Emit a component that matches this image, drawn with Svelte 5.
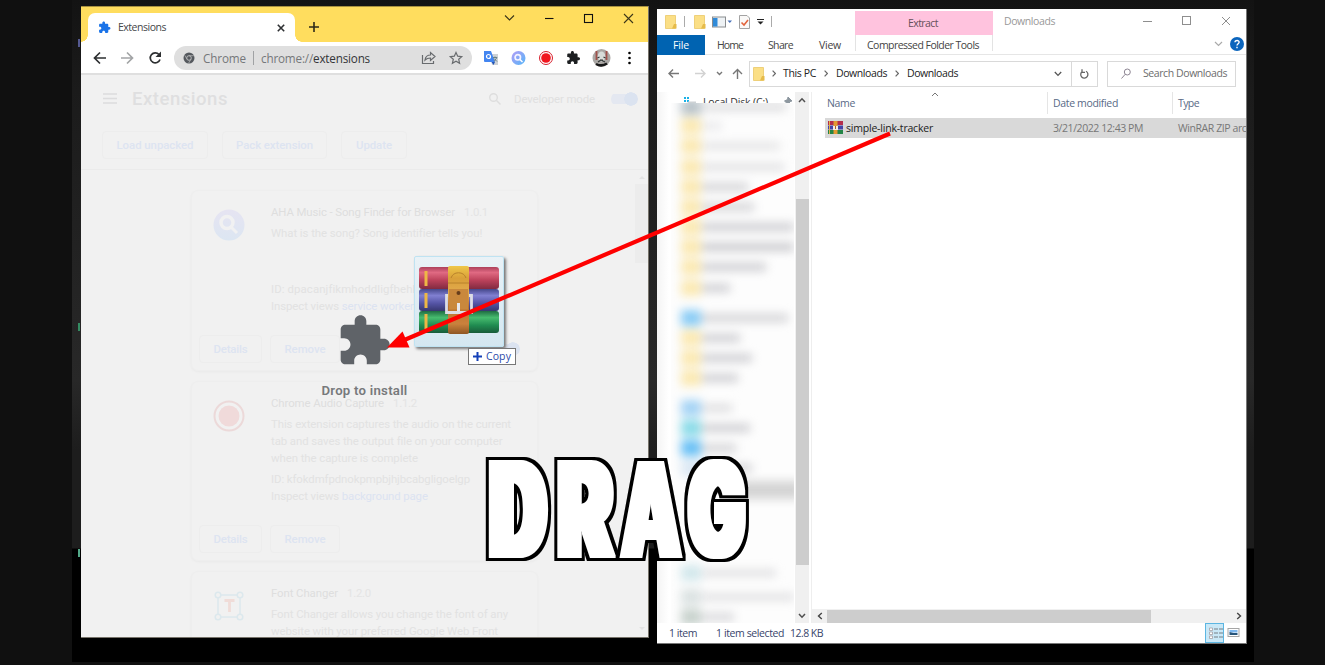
<script>
  const puzzle =
    'M20.5 11H19V7c0-1.1-.9-2-2-2h-4V3.5C13 2.12 11.88 1 10.5 1S8 2.12 8 3.5V5H4c-1.1 0-1.99.9-1.99 2v3.8H3.5c1.49 0 2.7 1.21 2.7 2.7s-1.21 2.7-2.7 2.7H2V20c0 1.1.9 2 2 2h3.8v-1.5c0-1.49 1.21-2.7 2.7-2.7 1.49 0 2.7 1.21 2.7 2.7V22H17c1.1 0 2-.9 2-2v-4h1.5c1.38 0 2.5-1.12 2.5-2.5S21.88 11 20.5 11z';

  const extensions = [
    {
      icon: 'search', name: 'AHA Music - Song Finder for Browser', nameW: 184, version: '1.0.1',
      lines: [['What is the song? Song identifier tells you!', 211]],
      id: 'ID: dpacanjfikmhoddligfbehkpomnbgblf', idW: 203, view: 'service worker', viewW: 72, on: true
    },
    {
      icon: 'record', name: 'Chrome Audio Capture', nameW: 113, version: '1.1.2',
      lines: [
        ['This extension captures the audio on the current', 240],
        ['tab and saves the output file on your computer', 231],
        ['when the capture is complete', 147]
      ],
      id: 'ID: kfokdmfpdnokpmpbjhjbcabgligoelgp', idW: 199, view: 'background page', viewW: 86, on: false
    },
    {
      icon: 'font', name: 'Font Changer', nameW: 67, version: '1.2.0',
      lines: [
        ['Font Changer allows you change the font of any', 237],
        ['website with your preferred Google Web Front', 227]
      ],
      id: '', idW: 0, view: '', viewW: 0, on: false
    }
  ];

  // Blurred navigation entries: top, icon tint, label width, label opacity
  const nav = [
    [-2, '#b9c3c9', 84, 0.6], [17, '#fbe9b3', 20, 0.35], [37, '#fbe9b3', 78, 0.45], [58, '#fbe9b3', 82, 0.5],
    [78, '#fbe9b3', 46, 0.8], [98, '#fbe9b3', 52, 0.8], [118, '#fbe9b3', 92, 0.9], [138, '#fbe9b3', 92, 1.1],
    [158, '#fbe9b3', 64, 0.9], [179, '#fbe9b3', 28, 0.9], [209, '#8accf5', 86, 0.8], [229, '#fbe9b3', 38, 0.9],
    [249, '#fbe9b3', 50, 0.9], [269, '#fbe9b3', 36, 0.9], [299, '#a4d3f5', 30, 0.6], [319, '#8adbe8', 48, 0.9],
    [339, '#69c0f5', 34, 0.8], [359, '#dbe8f4', 50, 0.8], [464, '#d3e8ec', 74, 0.5], [488, '#dbe2e2', 92, 0.5],
    [508, '#c8d2cd', 32, 0.7]
  ];

  // Poster letters: slot, and how far the face is fattened sideways and vertically
  const rim = 3;
  const letters = [
    { c: 'D', x: 485.5, w: 65.5, fx: 5, fy: 0 },
    { c: 'R', x: 554, w: 65, fx: 4, fy: 1 },
    { c: 'A', x: 616.5, w: 69.5, fx: 3, fy: 0 },
    { c: 'G', x: 684, w: 65.5, fx: 4, fy: 2 }
  ];

  // Tracks a label out so that it takes up the given width
  function fit(node, width) {
    const n = node.textContent.length;
    const natural = node.getBoundingClientRect().width;
    node.style.letterSpacing = `${(width - natural) / n}px`;
  }

  // Scales a poster letter to its slot, leaving room for the fattening and the rim
  function slot(node, { c, x, w, fx, fy }) {
    const ctx = document.createElement('canvas').getContext('2d');
    ctx.font = '900 138px Inter';
    const m = ctx.measureText(c);
    const left = -m.actualBoundingBoxLeft;
    const sx = (w - 2 * (fx + rim)) / (m.actualBoundingBoxRight - left);
    const sy = (103.5 - 2 * (fy + rim)) / 100.4;
    node.setAttribute('transform', `translate(${x + fx + rim - left * sx} ${560.5 - fy - rim}) scale(${sx} ${sy})`);
  }
</script>

{#snippet books()}
  <svg class="books" viewBox="0 0 80 68" preserveAspectRatio="none">
    <defs>
      <linearGradient id="red" x2="0" y2="1"><stop offset="0" stop-color="#a83350" /><stop offset=".25" stop-color="#e0607a" /><stop offset=".6" stop-color="#b93550" /><stop offset="1" stop-color="#7b1c33" /></linearGradient>
      <linearGradient id="blue" x2="0" y2="1"><stop offset="0" stop-color="#393b83" /><stop offset=".3" stop-color="#7a78d0" /><stop offset=".65" stop-color="#4b49a0" /><stop offset="1" stop-color="#2b2a66" /></linearGradient>
      <linearGradient id="green" x2="0" y2="1"><stop offset="0" stop-color="#126235" /><stop offset=".3" stop-color="#3cb965" /><stop offset=".65" stop-color="#138545" /><stop offset="1" stop-color="#0a522c" /></linearGradient>
      <linearGradient id="belt" x2="0" y2="1"><stop offset="0" stop-color="#f0c53c" /><stop offset=".18" stop-color="#d99a2b" /><stop offset=".4" stop-color="#e2a642" /><stop offset=".6" stop-color="#b96a20" /><stop offset=".85" stop-color="#c97a30" /><stop offset="1" stop-color="#8a4c14" /></linearGradient>
    </defs>
    <rect x="0" y="1" width="80" height="22" rx="3" fill="url(#red)" />
    <rect x="0" y="23" width="80" height="22" rx="3" fill="url(#blue)" />
    <rect x="0" y="45" width="80" height="22" rx="3" fill="url(#green)" />
    <path d="M7 5v15M7 27v15M7 48v15" stroke="#efb338" stroke-width="3" />
    <rect x="29" y="0" width="21" height="68" rx="2" fill="url(#belt)" />
    <path d="M32 12a8 8 0 0 1 15 0M29 17h21" stroke="#b67a1d" fill="none" />
    <path d="M29 29.500h-1.500v17h25V29.500H50" fill="none" stroke="#dcdce4" stroke-width="2.800" />
    <path d="M30 23h19v20.500H30z" fill="#c8812f" />
    <circle cx="39.500" cy="27" r="2" fill="#5d300c" />
    <path d="M39.500 37v8" stroke="#e8e8ee" stroke-width="3" />
  </svg>
{/snippet}

{#snippet zip()}
  <svg class="zip" viewBox="0 0 15 13">
    <path d="M0 0h15v4H0z" fill="#b52d4c" /><path d="M0 4.500h15v4H0z" fill="#4444a8" /><path d="M0 9h15v4H0z" fill="#238546" />
    <path d="M1.500 0v13" stroke="#e5b04a" /><path d="M5.500 0h4v13h-4z" fill="#e49a32" /><path d="M5 5h5v4H5z" fill="#f3eee6" /><path d="M7.500 5v3" stroke="#b0601f" />
  </svg>
{/snippet}

{#snippet folder()}
  <svg class="folder" viewBox="0 0 12 14"><path d="M.5.5h10v13H.5z" fill="#fbdf86" stroke="#eed07a" /><path d="M9 9h2.500v4.500H7z" fill="#e6bb4a" /></svg>
{/snippet}

{#snippet chevron()}
  <svg class="chev" viewBox="0 0 4 7"><path d="M.6.6L3.400 3.500.6 6.400" fill="none" stroke="#666" stroke-width="1.200" /></svg>
{/snippet}

<div class="desktop">
  <div class="under"></div>
  <i class="fleck a"></i><i class="fleck b"></i><i class="fleck c"></i>

  <section class="chrome">
    <header class="tabs">
      <div class="tab">
        <svg class="tabicon" viewBox="0 0 24 24"><path d={puzzle} fill="#1a73e8" /></svg>
        <span class="tabname" use:fit={48}>Extensions</span>
        <svg class="x" viewBox="0 0 8 8"><path d="M.8.8l6.400 6.400M7.200.8L.8 7.200" stroke="#2e3033" stroke-width="1.600" /></svg>
      </div>
      <svg class="plus" viewBox="0 0 10 10"><path d="M5 0v10M0 5h10" stroke="#2e2a18" stroke-width="1.600" /></svg>
      <svg class="winbtns" viewBox="0 0 132 12">
        <g fill="none" stroke="#3c3619" stroke-width="1.100">
          <path d="M2 3.500L6.500 8 11 3.500" /><path d="M42 6.500h8.500" stroke="#111" />
          <rect x="81.500" y="2.500" width="8" height="8" stroke="#111" /><path d="M121 2l9 9M130 2l-9 9" />
        </g>
      </svg>
    </header>

    <div class="toolbar">
      <svg class="nav" viewBox="0 0 72 16" fill="none" stroke-width="1.700">
        <path d="M14 8H3M8 2.500L2.500 8 8 13.500" stroke="#2d2f31" />
        <path d="M29 8h11M35 2.500L40.500 8 35 13.500" stroke="#a2a4a6" />
        <path d="M67 4.500A5 5 0 1 0 68 9.500" stroke="#2d2f31" /><path d="M69 1.500v5.500h-5.500z" fill="#2d2f31" />
      </svg>
      <div class="omni">
        <svg class="globe" viewBox="0 0 12 12"><circle cx="6" cy="6" r="5.500" fill="#55595e" /><circle cx="6" cy="6" r="2.300" fill="none" stroke="#d0d0d0" stroke-width=".8" /><path d="M6 3.700h5M4 7.200L1.700 3.200M8 7.200L5.700 11" stroke="#bbb" stroke-width=".7" /></svg>
        <span class="site" use:fit={43}>Chrome</span><i></i>
        <span class="url"><span use:fit={52}>chrome://</span><b use:fit={57}>extensions</b></span>
        <svg class="acts" viewBox="0 0 44 14" fill="none" stroke="#686b6e" stroke-width="1.200">
          <path d="M2.500 4v8.500h11V10M5 9c.5-3.500 2.500-5 5.500-5V1.500L15 5.500 10.500 9.500V7C8 7 6.500 7.500 5 9z" />
          <path d="M36 1.500l1.700 3.700 4 .4-3 2.700.9 4L36 10.200l-3.600 2.100.9-4-3-2.700 4-.4z" />
        </svg>
      </div>
      <svg class="exts" viewBox="0 0 152 20">
        <defs><linearGradient id="aha" x2="1" y2="1"><stop offset="0" stop-color="#b39cf6" /><stop offset="1" stop-color="#55b6f8" /></linearGradient></defs>
        <path d="M6 6h8v11H8z" fill="#cfd2d5" /><path d="M0 3h7l4 11H1q-1 0-1-1z" fill="#4385f0" /><path d="M7.500 14h3.500l-1.500 3z" fill="#2457b8" />
        <circle cx="4.500" cy="8.500" r="2" fill="none" stroke="#fff" stroke-width="1.200" /><path d="M9 9.500h4M11 8.500v1M10 13.500l3-4M10 10.500l3 3" stroke="#698288" />
        <circle cx="34.500" cy="10" r="7" fill="url(#aha)" /><circle cx="33.800" cy="9.300" r="2.700" fill="none" stroke="#f5f3ff" stroke-width="1.700" /><path d="M36 11.500l2.500 2.500" stroke="#fff" stroke-width="1.500" />
        <circle cx="62" cy="10" r="6.500" fill="#fff" stroke="#d81e2c" stroke-width="1" /><circle cx="62" cy="10" r="4.800" fill="#f0171f" />
        <g transform="translate(82 2.500) scale(.61)"><path d={puzzle} fill="#1d1f21" /></g>
        <circle cx="117.500" cy="10" r="9" fill="#aaa7a4" /><path d="M112.500 3v9M122.500 3v9" stroke="#a0504a" stroke-width="1.800" /><ellipse cx="117.500" cy="8.500" rx="3.800" ry="5" fill="#d8dcd9" /><path d="M113.500 10l2-1M119.500 9l2 1M116 12h3M114 14l3-2 4 2" stroke="#343938" stroke-width="1.100" fill="none" /><path d="M112 16q5.500 3 11-.5" stroke="#181818" stroke-width="2.500" fill="none" />
        <circle cx="145.500" cy="5" r="1.300" /><circle cx="145.500" cy="10" r="1.300" /><circle cx="145.500" cy="15" r="1.300" />
      </svg>
    </div>

    <main class="page">
      <div class="pagehead">
        <div class="titlerow">
          <svg class="burger" viewBox="0 0 14 11"><path d="M0 1h14M0 5.500h14M0 10h14" stroke="#dcdcdd" stroke-width="1.600" /></svg>
          <h1 use:fit={96}>Extensions</h1>
          <svg class="find" viewBox="0 0 14 14"><circle cx="5.500" cy="5.500" r="3.800" fill="none" stroke="#dedede" stroke-width="1.400" /><path d="M8.500 8.500l4 4" stroke="#dedede" stroke-width="1.500" /></svg>
          <span class="dev" use:fit={81}>Developer mode</span>
          <span class="toggle"></span>
        </div>
        <div class="btns">
          <span style:width="106px"><b use:fit={77}>Load unpacked</b></span>
          <span style:width="105px"><b use:fit={77}>Pack extension</b></span>
          <span style:width="66px"><b use:fit={36}>Update</b></span>
        </div>
      </div>
      <div class="cards">
        {#each extensions as e}
          <article>
            <svg class="exticon" viewBox="0 0 32 32">
              {#if e.icon === 'search'}
                <defs><linearGradient id="pale" x2="0" y2="1"><stop offset="0" stop-color="#e6e4f2" /><stop offset="1" stop-color="#dce6f2" /></linearGradient></defs>
                <circle cx="16" cy="16" r="15.500" fill="url(#pale)" /><circle cx="14" cy="13.500" r="6" fill="none" stroke="#f1f1f2" stroke-width="3.500" /><path d="M18 18l6 6" stroke="#f1f1f2" stroke-width="3" />
              {:else if e.icon === 'record'}
                <circle cx="16" cy="16" r="14.500" fill="#f1f1f1" stroke="#ecd9d9" stroke-width="2" /><circle cx="16" cy="16" r="10.500" fill="#f0dada" />
              {:else}
                <g fill="none" stroke="#dce8ed" stroke-width="1.500"><rect x="5" y="5" width="22" height="22" /><g fill="#f1f1f1"><circle cx="5" cy="5" r="2.800" /><circle cx="27" cy="5" r="2.800" /><circle cx="5" cy="27" r="2.800" /><circle cx="27" cy="27" r="2.800" /></g></g>
                <path d="M11.500 10.500h10M16.500 10v12" stroke="#f0dcd8" stroke-width="2.800" fill="none" />
              {/if}
            </svg>
            <div class="info">
              <p class="name"><span use:fit={e.nameW}>{e.name}</span><em use:fit={24}>{e.version}</em></p>
              <div class="desc">{#each e.lines as [t, w]}<p><span use:fit={w}>{t}</span></p>{/each}</div>
              {#if e.id}
                <div class="ids">
                  <p><span use:fit={e.idW}>{e.id}</span></p>
                  <p><span use:fit={68}>Inspect views</span> <a use:fit={e.viewW}>{e.view}</a></p>
                </div>
              {/if}
            </div>
            {#if e.id}
              <div class="foot">
                <span style:width="63px"><b use:fit={34}>Details</b></span>
                <span style:width="70px"><b use:fit={41}>Remove</b></span>
                {#if e.on}<i></i>{/if}
              </div>
            {/if}
          </article>
        {/each}
      </div>
      <div class="pagescroll"><u></u><i></i><u class="dn"></u></div>
    </main>
    <div class="drop">
      <svg viewBox="0 0 24 24"><path d={puzzle} fill="#5f6368" /></svg>
      <strong use:fit={86}>Drop to install</strong>
    </div>
  </section>

  <section class="explorer">
    <header class="caption">
      <div class="quick">
        {@render folder()}<i></i>{@render folder()}
        <svg class="pane" viewBox="0 0 20 12"><rect x=".5" y="1" width="13" height="10" fill="#eef2f5" stroke="#8a8d90" /><path d="M1 2h4.500v8.500H1z" fill="#2f8ad8" /><path d="M15.500 4.500h4.500l-2.200 2.500z" fill="#4770b8" /></svg>
        <svg class="check" viewBox="0 0 11 14"><path d="M.5.500h7.500l2.500 2.500v10.500H.5z" fill="#faf9f8" stroke="#a3a3a3" /><path d="M2.500 7.500L5 10l4-5" fill="none" stroke="#e2643c" stroke-width="1.600" /></svg>
        <svg class="more" viewBox="0 0 7 6"><path d="M0 .5h7" stroke="#222" /><path d="M.5 2.500h6L3.500 5.500z" fill="#222" /></svg><i></i>
      </div>
      <div class="extract"><span use:fit={30}>Extract</span></div>
      <span class="wtitle" use:fit={51}>Downloads</span>
      <svg class="wbtns" viewBox="0 0 90 12" fill="none" stroke="#8e8e8e"><path d="M1 6.500h9M80 2l8 8M88 2l-8 8" /><rect x="40.500" y="1.500" width="8" height="8" /></svg>
    </header>
    <div class="ribbon">
      <b><span use:fit={16}>File</span></b>
      <span class="r1"><span use:fit={26}>Home</span></span>
      <span class="r2"><span use:fit={25}>Share</span></span>
      <span class="r3"><span use:fit={22}>View</span></span>
      <span class="r4"><span use:fit={112}>Compressed Folder Tools</span></span>
      <svg class="help" viewBox="0 0 30 14"><path d="M1 5l3.500 3.500L8 5" fill="none" stroke="#aaa" stroke-width="1.200" /><circle cx="23" cy="7" r="7" fill="#0b65bd" /><path d="M21 5.300c0-2.600 4.300-2.300 4.100 0C25 6.700 23 6.800 23 8.500M23 9.700v1.600" stroke="#fff" stroke-width="1.400" fill="none" /></svg>
    </div>
    <div class="address">
      <svg class="arrows" viewBox="0 0 78 14" fill="none" stroke="#777" stroke-width="1.400">
        <path d="M11 6.500H1M5 2.500L1 6.500l4 4" /><path d="M27 6.500h10M33 2.500l4 4-4 4" stroke="#d2d2d2" /><path d="M49 5L51.500 7.500 54 5" /><path d="M69.500 12V3M65 7l4.500-4.500L74 7" />
      </svg>
      <div class="path">
        {@render folder()}
        {@render chevron()}<span use:fit={33}>This PC</span>{@render chevron()}<span use:fit={51}>Downloads</span>{@render chevron()}<span use:fit={51}>Downloads</span>
        <svg class="down" viewBox="0 0 8 6"><path d="M.8 1l3.200 3.400L7.200 1" fill="none" stroke="#555" stroke-width="1.300" /></svg>
        <div class="refresh"><svg viewBox="0 0 10 12"><path d="M6.500 2.800A3.600 3.600 0 1 1 2.800 3M2.500 .8v3h3" transform="translate(0 .5)" fill="none" stroke="#666" stroke-width="1.300" /></svg></div>
      </div>
      <div class="search">
        <svg viewBox="0 0 11 12"><circle cx="6.800" cy="4" r="3" fill="none" stroke="#8d8593" /><path d="M4.700 6.300L1 10.500" stroke="#8d8593" /></svg>
        <span use:fit={84}>Search Downloads</span>
      </div>
    </div>
    <div class="body">
      <aside>
        <div class="disk">
          <svg viewBox="0 0 12 10"><path d="M0 1h2v2H0zM3 1h2v2H3zM0 4h2v2H0zM3 4h2v2H3z" fill="#19b1e6" /><path d="M4 5.500h8v5H2z" fill="#cdd2d5" /></svg>
          <span use:fit={65}>Local Disk (C:)</span>
          <svg class="pin" viewBox="0 0 9 9"><path d="M5 0l4 4-2 .5-1.500 3L1.500 4 4.500 2.500zM0 8.500L3 6" fill="#8d979f" stroke="#8d979f" /></svg>
        </div>
        <div class="fog">
          <div class="haze">
            {#each nav as [top, tint, w, o]}
              <div class="row" style:top="{top}px">
                <i style:background={tint}></i><u style:width="{w}px" style:opacity={o}></u>
              </div>
            {/each}
            <div class="sel"></div>
          </div>
        </div>
      </aside>
      <div class="vscroll">
        <svg viewBox="0 0 8 6"><path d="M1 5l3-3.200L7 5" fill="none" stroke="#505050" stroke-width="1.500" /></svg>
        <i></i>
        <svg viewBox="0 0 8 6"><path d="M1 1l3 3.200L7 1" fill="none" stroke="#505050" stroke-width="1.500" /></svg>
      </div>
      <div class="list">
        <div class="cols">
          <span class="c1"><span use:fit={28}>Name</span></span>
          <span class="c2"><span use:fit={65}>Date modified</span></span>
          <span class="c3"><span use:fit={21}>Type</span></span>
          <svg class="sort" viewBox="0 0 8 5"><path d="M1 4l3-3 3 3" fill="none" stroke="#777" /></svg>
        </div>
        <div class="file">
          <span class="c1">{@render zip()}<span use:fit={87}>simple-link-tracker</span></span>
          <span class="c2"><span use:fit={90}>3/21/2022 12:43 PM</span></span>
          <span class="c3"><span use:fit={87}>WinRAR ZIP archive</span></span>
        </div>
        <div class="hscroll">
          <svg viewBox="0 0 6 8"><path d="M4.800 1L1.500 4l3.300 3" fill="none" stroke="#444" stroke-width="1.400" /></svg>
          <i></i>
          <svg viewBox="0 0 6 8"><path d="M1.200 1l3.300 3-3.300 3" fill="none" stroke="#444" stroke-width="1.400" /></svg>
        </div>
      </div>
    </div>
    <footer>
      <span class="f1"><span use:fit={28}>1 item</span></span>
      <span class="f2"><span use:fit={68}>1 item selected</span></span>
      <span class="f3"><span use:fit={33}>12.8 KB</span></span>
      <svg class="views" viewBox="0 0 36 20">
        <rect x=".5" y=".5" width="18" height="19" fill="#c9e8f7" stroke="#5cb6e2" /><path d="M4.500 5h3v2.500h-3zM4.500 9h3v2.500h-3zM4.500 13h3v2.500h-3z" fill="#fff" stroke="#a5a0a5" stroke-width=".8" /><path d="M9 6h4M14 6h4M9 10h4M14 10h4M9 14h4M14 14h4" stroke="#777e85" />
        <rect x="23" y="5.500" width="11" height="8" fill="#fff" stroke="#a5a5a5" /><path d="M24.500 7h8v2.500h-8z" fill="#7eb8ef" /><path d="M24.500 9l4 1h4v2h-8z" fill="#27557a" />
      </svg>
    </footer>
  </section>

  <div class="ghost">{@render books()}</div>
  <div class="copy"><svg viewBox="0 0 9 9"><path d="M4.500 0v9M0 4.500h9" stroke="#1440b8" stroke-width="2" /></svg><span use:fit={25}>Copy</span></div>

  <svg class="overlay" viewBox="0 0 1325 665">
    <defs>
      {#each letters as l}
        <filter id="poster-{l.c}" filterUnits="userSpaceOnUse" x="470" y="440" width="300" height="140" color-interpolation-filters="sRGB">
          {#if l.fy}
            <feMorphology operator="dilate" radius="{l.fx} {l.fy}" result="face" />
          {:else}
            <feOffset dx={-l.fx} result="a" in="SourceGraphic" />
            <feOffset dx={-l.fx / 2} result="b" in="SourceGraphic" />
            <feOffset dx={l.fx / 2} result="c" in="SourceGraphic" />
            <feOffset dx={l.fx} result="d" in="SourceGraphic" />
            <feMerge result="face"><feMergeNode in="a" /><feMergeNode in="b" /><feMergeNode in="SourceGraphic" /><feMergeNode in="c" /><feMergeNode in="d" /></feMerge>
          {/if}
          <feMorphology in="face" operator="dilate" radius={rim} result="wide" />
          <feColorMatrix in="wide" values="0 0 0 0 0  0 0 0 0 0  0 0 0 0 0  0 0 0 1 0" result="rim" />
          <feMerge><feMergeNode in="rim" /><feMergeNode in="face" /></feMerge>
        </filter>
      {/each}
    </defs>
    <path d="M890 133.500L402 341" stroke="#fe0000" stroke-width="4.200" />
    <path d="M387 347.500L402.500 331.500 409.500 347.500z" fill="#fe0000" />
    {#each letters as l}
      <g filter="url(#poster-{l.c})"><text use:slot={l}>{l.c}</text></g>
    {/each}
  </svg>
</div>

<style>
  :global(body) { background: #111; }
  .desktop { position: relative; width: 1325px; height: 665px; overflow: hidden; background: #101010; font-family: 'Open Sans', 'Noto Sans', sans-serif; font-size: 10.5px; }
  .desktop *, .desktop { box-sizing: border-box; }
  svg { display: block; flex: none; }
  span, b, em, strong, a { white-space: pre; }
  p, h1 { margin: 0; }
  .under { position: absolute; left: 72px; top: 0; width: 1182px; height: 662px; background: linear-gradient(#131313 0, #1b1b1b 90px, #282828 380px, #1d1d1d 450px, #1d1d1d 548px, #000 549px); }
  .fleck { position: absolute; left: 78px; width: 2px; height: 8px; background: #555a91; }
  .fleck.a { top: 39px; }
  .fleck.b { top: 323px; background: #348c62; }
  .fleck.c { top: 549px; background: #53a989; }

  .chrome { position: absolute; left: 81px; top: 6px; width: 568px; height: 632px; background: #f1f1f1; display: flex; flex-direction: column; overflow: hidden; border: solid #77736a; border-width: 0 1px 1px 0; }
  .tabs { height: 36px; flex: none; background: #ffdd5e; display: flex; align-items: flex-start; border-top: 1px solid #a89140; }
  .tab { position: relative; margin: 6px 0 0 7px; width: 207px; height: 29px; background: #fff; border-radius: 7px 7px 0 0; display: flex; align-items: center; padding: 0 10px 0 10px; }
  .tab::before, .tab::after { content: ''; position: absolute; bottom: 0; width: 7px; height: 7px; }
  .tab::before { left: -7px; background: radial-gradient(circle at 0 0, #ffdd5e 6.500px, #fff 7px); }
  .tab::after { right: -7px; background: radial-gradient(circle at 100% 0, #ffdd5e 6.500px, #fff 7px); }
  .tabicon { width: 13px; height: 13px; }
  .tabname { margin-left: 7px; font-size: 10.500px; color: #45474a; margin-top: -1px; }
  .x { width: 8px; height: 8px; margin-left: auto; }
  .plus { width: 10px; height: 10px; margin: 15px 0 0 14px; }
  .winbtns { width: 132px; height: 12px; margin: 5px 13px 0 auto; }
  .toolbar { height: 33px; flex: none; background: #fff; border-bottom: 2px solid #dfdfdf; display: flex; align-items: center; padding-left: 11px; }
  .nav { width: 72px; height: 16px; }
  .omni { margin-left: 10px; width: 298px; height: 24px; border-radius: 12px; background: #dfdfdf; display: flex; align-items: center; padding: 0 8px 0 9px; font-size: 11.700px; }
  .globe { width: 12px; height: 12px; }
  .site { color: #75777a; margin-left: 8px; }
  .omni i { width: 1px; height: 14px; background: #a0a2a4; margin: 0 7px 0 7px; }
  .url { display: flex; color: #75777a; }
  .url b { font-weight: 400; color: #333538; }
  .acts { width: 44px; height: 14px; margin-left: auto; }
  .exts { width: 152px; height: 20px; margin-left: 12px; }

  .page { position: relative; flex: 1; min-height: 0; overflow: hidden; font-family: Roboto, sans-serif; font-size: 11.400px; color: #e2e2e2; display: flex; flex-direction: column; }
  .pagehead { height: 95px; flex: none; border-bottom: 1px solid #ebebeb; }
  .titlerow { display: flex; align-items: center; height: 47px; padding: 0 10px 0 22px; }
  .burger { width: 14px; height: 11px; }
  h1 { margin-left: 15px; font-size: 18.500px; line-height: 24px; font-weight: 500; color: #dfdfe0; }
  .find { width: 14px; height: 14px; margin-left: auto; margin-right: 12px; }
  .dev { color: #e0e0e0; }
  .toggle { width: 27px; height: 14px; margin-left: 16px; background: radial-gradient(circle at 20px 7px, #dbe3f0 6.500px, transparent 7px), linear-gradient(transparent 2px, #e4e8f1 2px 12px, transparent 12px); border-radius: 7px; }
  .btns { display: flex; padding: 9px 0 0 21px; gap: 14px; height: 37px; }
  .btns span, .foot span { border: 1px solid #ededed; border-radius: 4px; display: flex; align-items: center; justify-content: center; height: 28px; color: #dde4f1; }
  .btns b, .foot b { font-weight: 500; }
  .cards { display: flex; flex-direction: column; gap: 10px; padding: 20px 0 0 110px; }
  article { width: 347px; height: 180.500px; flex: none; border: 1px solid #eee; border-radius: 7px; box-shadow: 0 1px 2px #e9e9e9; display: grid; grid-template-columns: 79px 1fr; grid-template-rows: 1fr 37px; }
  .exticon { width: 32px; height: 32px; margin: 18px 0 0 21px; }
  .info { padding-top: 13px; line-height: 17.200px; }
  .name { color: #dedede; line-height: 17px; }
  .name em { font-style: normal; margin-left: 9px; color: #e4e4e4; }
  .desc { margin-top: 4px; height: 52px; }
  .ids { margin-top: 3.500px; }
  .ids a { color: #dce3f1; }
  .foot { grid-column: 1 / 3; display: flex; gap: 8px; padding-left: 7px; align-items: flex-start; padding-top: 2px; }
  .foot i { margin: 7px 17px 0 auto; width: 27px; height: 14px; border-radius: 7px; background: radial-gradient(circle at 20px 7px, #dbe3f0 6.500px, transparent 7px), linear-gradient(transparent 2px, #e4e8f1 2px 12px, transparent 12px); }
  .pagescroll { position: absolute; right: 0; top: 98px; width: 13px; height: 465px; }
  .pagescroll u { position: absolute; left: 4px; top: 3px; border: 3px solid transparent; border-top: 0; border-bottom-color: #e3e3e3; }
  .pagescroll .dn { top: auto; bottom: 8px; border: 3px solid transparent; border-bottom: 0; border-top-color: #e3e3e3; }
  .pagescroll i { display: block; margin-top: 11px; height: 79px; background: #ececec; }
  .drop { position: absolute; left: 240px; top: 307px; width: 87px; display: flex; flex-direction: column; font-family: Roboto, sans-serif; color: #77797c; }
  .drop svg { width: 56px; height: 56px; margin-left: 15px; }
  .drop strong { font-size: 13.200px; font-weight: 600; line-height: 18px; margin-top: 13px; align-self: flex-start; margin-left: .5px; }

  .explorer { position: absolute; left: 657px; top: 9px; width: 590px; height: 635px; background: #fff; border: solid #777; border-width: 0 1px 1px 0; display: flex; flex-direction: column; overflow: hidden; color: #333; }
  .caption { height: 26px; flex: none; display: flex; align-items: flex-start; }
  .quick { width: 198px; height: 25px; display: flex; align-items: center; padding-left: 8px; }
  .quick i { width: 1px; height: 11px; background: #aaa; margin: 0 9px 0 7px; }
  .folder { width: 12px; height: 14px; }
  .pane { width: 20px; height: 12px; margin-left: 6px; }
  .check { width: 11px; height: 14px; margin-left: 7px; }
  .more { width: 7px; height: 6px; margin-left: 7px; }
  .extract { width: 138px; height: 24px; margin-top: 2px; background: #ffc3de; display: flex; align-items: center; justify-content: center; color: #65505a; padding-right: 2px; }
  .wtitle { margin: 5px 0 0 11px; line-height: 15px; color: #999; }
  .wbtns { width: 90px; height: 12px; margin: 6px 14px 0 auto; }
  .ribbon { height: 20px; flex: none; display: flex; line-height: 20px; border-bottom: 1px solid #e6e6e6; color: #444; }
  .ribbon b { width: 48px; background: #0063b1; color: #fff; font-weight: 400; padding-left: 16px; margin-bottom: -1px; }
  .r1 { margin-left: 12px; width: 51px; }
  .r2 { width: 51px; }
  .r3 { width: 36px; }
  .r4 { width: 138px; padding-left: 11px; border: solid #e3e3e3; border-width: 0 1px; height: 16px; }
  .help { width: 30px; height: 14px; margin: 2px 2px 0 auto; }
  .address { display: flex; height: 37px; flex: none; align-items: center; padding: 0 10px 0 11px; }
  .arrows { width: 78px; height: 14px; }
  .path { margin-left: 3px; width: 349px; height: 26px; border: 1px solid #d9d9d9; display: flex; align-items: center; padding-left: 3px; color: #222; }
  .path > span { margin-top: -2px; }
  .path .chev { width: 4px; height: 7px; margin: 0 8px; }
  .path .folder + .chev { margin-left: 7px; margin-right: 7px; }
  .down { width: 8px; height: 6px; margin-left: auto; margin-right: 9px; }
  .refresh { width: 26px; height: 24px; border-left: 1px solid #d9d9d9; display: flex; align-items: center; justify-content: center; }
  .refresh svg { width: 11px; height: 12px; }
  .search { margin-left: auto; width: 129px; height: 26px; border: 1px solid #d9d9d9; display: flex; align-items: center; padding-left: 12px; color: #6d6d6d; }
  .search svg { width: 12px; height: 12px; margin-right: 11px; }
  .search span { margin-top: -2px; }
  .body { display: flex; height: 531px; flex: none; }
  aside { width: 138px; display: flex; flex-direction: column; background: linear-gradient(90deg, #f4f4f4, #fff 12px); }
  .disk { height: 11px; padding: 3px 0 0 27px; display: flex; overflow: hidden; line-height: 14px; flex: none; }
  .disk span { margin-left: 7px; margin-top: 0; }
  .disk svg { width: 12px; height: 10px; margin-top: 1px; }
  .disk .pin { width: 9px; height: 9px; margin-left: 15px; margin-top: 2px; }
  .fog { margin-left: 14px; width: 123px; height: 520px; position: relative; overflow: hidden; background: #fdfdfd; }
  .haze { position: absolute; inset: 0; filter: blur(5px); }
  .row { position: absolute; left: 10px; display: flex; align-items: center; height: 12px; }
  .row i { width: 20px; height: 16px; }
  .row u { height: 8px; background: #c9c9cd; margin-left: 1px; }
  .sel { position: absolute; left: 60px; top: 378px; width: 70px; height: 18px; background: #d4d4d4; }
  .vscroll { width: 14px; background: #f0f0f0; display: flex; flex-direction: column; align-items: center; padding: 5px 0 4px; }
  .vscroll svg, .hscroll svg { width: 8px; height: 6px; }
  .vscroll i { width: 13px; height: 366px; margin: 96px 0 auto; background: #cdcdcd; }
  .list { flex: 1; min-width: 0; margin-left: 2px; border-left: 1px solid #eee; display: flex; flex-direction: column; }
  .cols { position: relative; display: flex; height: 22px; line-height: 22px; color: #596a86; margin-left: 13px; flex: none; }
  .c1 { width: 222px; padding-left: 2px; flex: none; }
  .c2 { width: 125px; padding-left: 5px; flex: none; }
  .c3 { padding-left: 5px; }
  .cols .c2, .cols .c3 { border-left: 1px solid #e5e5e5; }
  .sort { position: absolute; left: 106px; top: 0; width: 8px; height: 5px; }
  .file { display: flex; height: 20px; line-height: 20px; margin: 4px 0 0 13px; background: #d9d9d9; color: #777; overflow: hidden; flex: none; }
  .file .c1 { display: flex; align-items: center; color: #222; }
  .file .c2, .file .c3 { padding-left: 6px; }
  .books { width: 80px; height: 68px; }
  .zip { width: 15px; height: 13px; margin: -2px 3px 0 1px; }
  .hscroll { height: 14px; margin-top: auto; background: #f0f0f0; display: flex; align-items: center; padding: 0 3px 0 4px; }
  .hscroll svg { height: 8px; }
  .hscroll i { width: 324px; height: 13px; background: #cdcdcd; margin: 0 auto 0 3px; }
  footer { display: flex; flex: 1; line-height: 21px; color: #38456b; padding-left: 12px; }
  .f1 { width: 47px; }
  .f2 { width: 74px; }
  .views { width: 36px; height: 20px; margin: 0 5px 0 auto; }

  .ghost { position: absolute; left: 414px; top: 256px; width: 90px; height: 91px; border: 1px solid #bfe3f2; border-radius: 2px; background: linear-gradient(#e9f2f7ee, #d2e6f0ee); box-shadow: 2px 2px 3px #777; padding: 9px 0 0 4px; }
  .ghost .books { opacity: .93; }
  .copy { position: absolute; left: 468px; top: 348px; width: 48px; height: 17px; background: #fff; border: 1px solid #777; display: flex; align-items: center; padding-left: 4px; color: #2b4aa8; }
  .copy span { margin-top: -1px; }
  .copy svg { width: 9px; height: 9px; margin-right: 4px; }
  .overlay { position: absolute; inset: 0; width: 1325px; height: 665px; }
  .overlay text { font-family: Inter, sans-serif; font-weight: 900; font-size: 138px; fill: #fff; }
</style>
